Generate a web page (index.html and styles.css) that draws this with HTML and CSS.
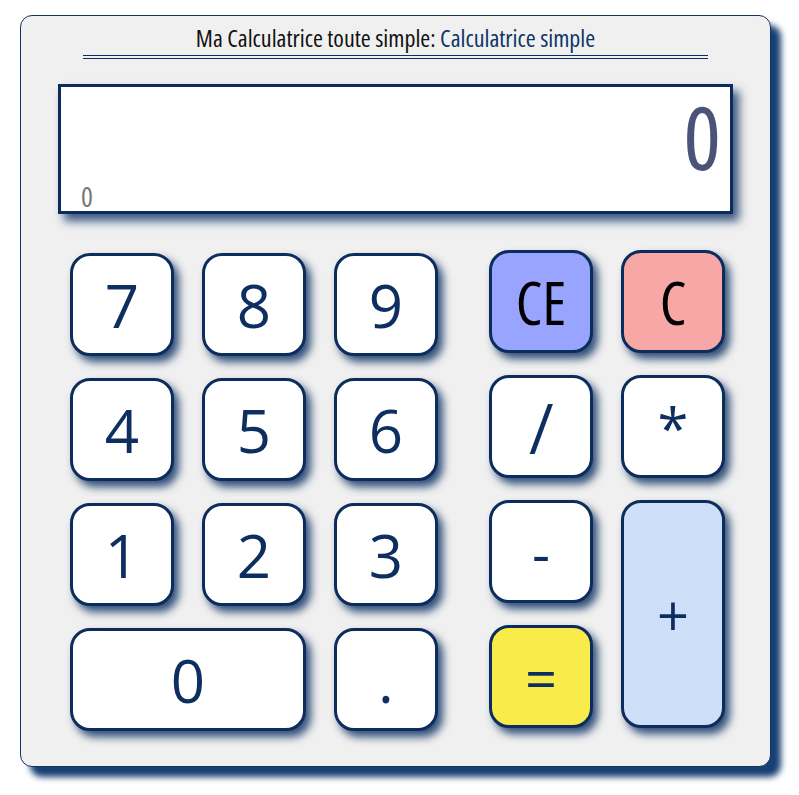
FILE: index.html
```html
<!DOCTYPE html>
<html lang="fr">
<head>
<meta charset="utf-8">
<title>Calculatrice simple</title>
<link rel="stylesheet" href="styles.css">
</head>
<body>
<div class="calc">
  <h1 class="title">Ma Calculatrice toute simple: <span class="sub">Calculatrice simple</span></h1>
  <div class="display">
    <div class="current">0</div>
    <div class="history">0</div>
  </div>
  <div class="keypad">
    <div class="digits">
      <button class="key">7</button>
      <button class="key">8</button>
      <button class="key">9</button>
      <button class="key">4</button>
      <button class="key">5</button>
      <button class="key">6</button>
      <button class="key">1</button>
      <button class="key">2</button>
      <button class="key">3</button>
      <button class="key wide">0</button>
      <button class="key">.</button>
    </div>
    <div class="ops">
      <button class="key ce">CE</button>
      <button class="key clear">C</button>
      <button class="key op slash">/</button>
      <button class="key op">*</button>
      <button class="key op">-</button>
      <button class="key op plus">+</button>
      <button class="key op equals">=</button>
    </div>
  </div>
</div>
</body>
</html>
```
FILE: styles.css
```css
html, body {
  margin: 0;
  padding: 0;
  background: #ffffff;
}
body {
  min-height: 795px;
  padding-top: 15px;
  box-sizing: border-box;
  font-family: "Open Sans", "DejaVu Sans Condensed", sans-serif;
  font-stretch: 75%;
  color: #0d2f5f;
}
.calc {
  box-sizing: border-box;
  width: 751px;
  margin: 0 0 0 20px;
  padding: 10px 37px 35px 37px;
  background: #f0f0f0;
  border: 1px solid #123461;
  border-radius: 12px;
  box-shadow: 10px 10px 6px #173f73;
}
.title {
  width: 625px;
  margin: 0 auto;
  padding: 0 0 5px 0;
  font-size: 24px;
  line-height: 24px;
  font-weight: normal;
  font-stretch: 80%;
  text-align: center;
  color: #111111;
  border-bottom: 4px double #0d2f5f;
}
.sub {
  color: #0d3568;
}
.display {
  box-sizing: border-box;
  height: 130px;
  margin-top: 25px;
  padding: 4px 9px 0 20px;
  background: #ffffff;
  border: 3px solid #0b2b5c;
  box-shadow: 6px 7px 9px rgba(15, 50, 100, 0.8);
}
.current {
  font-size: 88px;
  line-height: 90px;
  font-stretch: 87.5%;
  text-align: right;
  color: #4b5478;
}
.history {
  font-size: 28px;
  line-height: 24px;
  margin-top: 3px;
  color: #777777;
}
.keypad {
  display: flex;
  gap: 51px;
  margin: 39px 0 0 12px;
}
.digits, .ops {
  display: grid;
  grid-template-columns: 104px 104px;
  grid-auto-rows: 103px;
  column-gap: 28px;
  row-gap: 22px;
}
.digits {
  grid-template-columns: 104px 104px 104px;
}
.ops {
  margin-top: -3px;
}
.key {
  box-sizing: border-box;
  margin: 0;
  padding: 0;
  font-family: inherit;
  font-size: 60px;
  font-stretch: 90%;
  line-height: 1;
  color: #0d2f5f;
  background: #ffffff;
  border: 3px solid #0c2d5c;
  border-radius: 20px;
  box-shadow: 5px 6px 8px rgba(15, 50, 100, 0.85);
}
.wide {
  grid-column: span 2;
}
.ce {
  background: #99a4ff;
  color: #000000;
  font-stretch: 75%;
}
.clear {
  background: #f7a8a6;
  color: #000000;
  font-stretch: 75%;
}
.op {
  font-size: 56px;
}
.slash {
  font-size: 70px;
  font-stretch: 75%;
}
.plus {
  grid-column: 2;
  grid-row: 3 / span 2;
  background: #cddff9;
}
.equals {
  grid-column: 1;
  grid-row: 4;
  background: #f9ec4a;
}
```
